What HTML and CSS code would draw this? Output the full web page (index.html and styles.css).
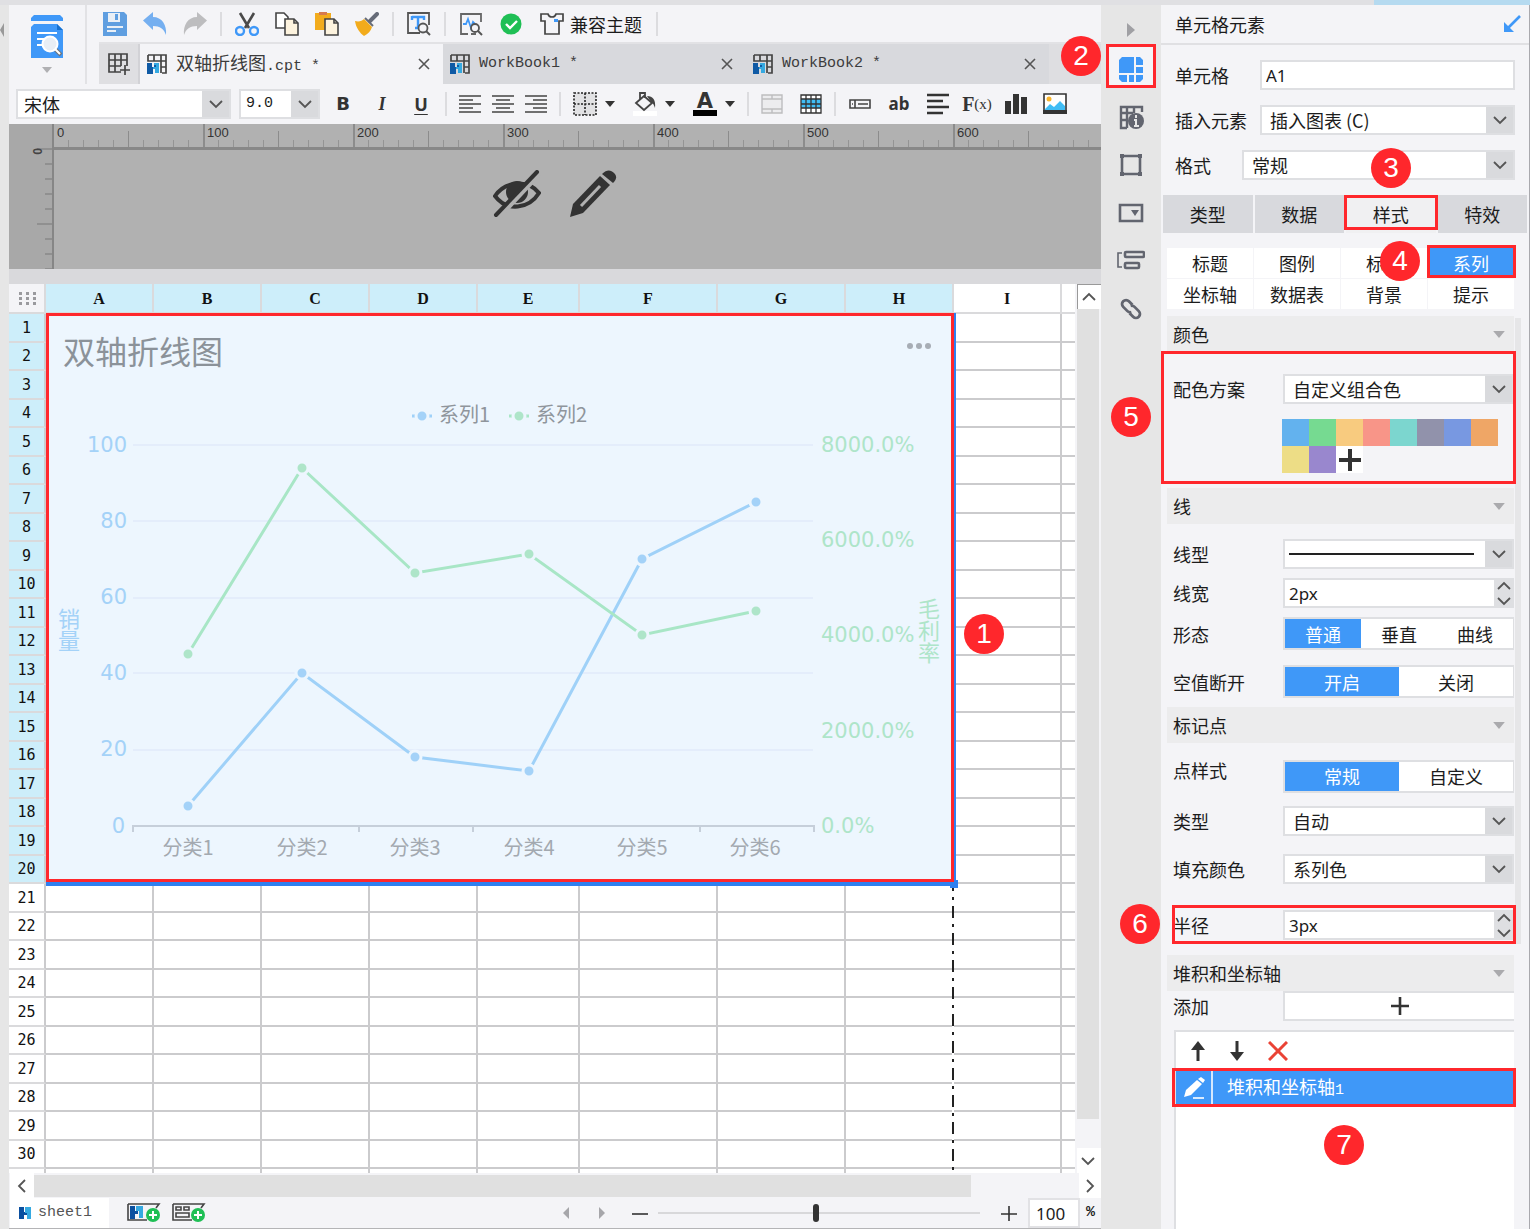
FILE: index.html
```html
<!DOCTYPE html>
<html lang="zh-CN">
<head>
<meta charset="utf-8">
<title>双轴折线图.cpt</title>
<link rel="stylesheet" href="styles.css">
<script src="sheet.js" defer></script>
</head>
<body>
<svg class="defs" aria-hidden="true">
  <symbol id="i-book" viewBox="0 0 20 20"><path d="M1 1h18v18h-4M1 1v6h13V1M7 1v6M14 7v12M14 7h5M14 13h5" fill="none" stroke="#444" stroke-width="1.700"/><path d="M0 9h5v4h2v-2h4v3H6v6H0z" fill="#0f5aa5"/><path d="M7 9h5v10H8v-4H6v-2h3v-2H7z" fill="#35a9e1"/></symbol>
  <symbol id="i-close" viewBox="0 0 14 14"><path d="M2 2l10 10M12 2L2 12" fill="none" stroke="#555" stroke-width="1.6"/></symbol>
  <symbol id="i-down" viewBox="0 0 14 14"><path d="M1 4l6 6 6-6" fill="none" stroke="#555" stroke-width="1.8"/></symbol>
  <symbol id="i-up" viewBox="0 0 14 14"><path d="M1 10l6-6 6 6" fill="none" stroke="#555" stroke-width="1.8"/></symbol>
  <symbol id="i-caret" viewBox="0 0 10 6"><path d="M0 0h10L5 6z" fill="currentColor"/></symbol>
  <symbol id="i-h" viewBox="0 0 12 12"><path d="M0 0h5v5h3v3H5v4H0z" fill="#0b50a0"/><path d="M6 0h6v12H8V6H6z" fill="#35a9e1"/></symbol>
</svg>

<div class="topstrip"><span class="topstrip-accent"></span></div>
<div class="app">
  <div class="edge"><svg class="edge-mark" viewBox="0 0 4 14"><path d="M4 0v14L0 7z" fill="#999"/></svg></div>

  <main class="work">
    <header class="head">
      <button class="filemenu" aria-label="文件">
        <svg width="32" height="44" viewBox="0 0 32 44"><path d="M3 0h26l3 3v3H0V3z" fill="#3f98f8"/><path d="M3 9h23l6 6v28H0V12z" fill="#3f98f8"/><path d="M26 9l6 6h-6z" fill="#1670cf"/><path d="M6 18h20M6 24h10M6 30h8" stroke="#fff" stroke-width="2"/><path d="M24 34l6 6" stroke="#6f747a" stroke-width="4"/><path d="M24 34l5 5" stroke="#fff" stroke-width="2"/><circle cx="19" cy="29" r="7.500" fill="#e8eef5" stroke="#fff" stroke-width="2"/></svg>
        <svg class="grey" width="10" height="6"><use href="#i-caret"/></svg>
      </button>
      <div class="head-right">
        <div class="toolbar">
          <button aria-label="保存"><svg viewBox="0 0 24 24"><path d="M0 0h21l3 3v21H0z" fill="#5f9ee0"/><path d="M5 1h12v9H5z" fill="#e9eff6"/><path d="M12 2h3v6h-3z" fill="#5f9ee0"/><path d="M4 15h16M4 19h9" stroke="#e9eff6" stroke-width="2"/></svg></button>
          <button aria-label="撤销"><svg viewBox="0 0 24 24"><path d="M0 8.500L10 0v5c9 0 14 8 13 18-2-6-6-9-13-9v4z" fill="#75aff0"/></svg></button>
          <button aria-label="重做"><svg viewBox="0 0 24 24"><path d="M24 8.500L14 0v5C5 5 0 13 1 23c2-6 6-9 13-9v4z" fill="#bdbdbf"/></svg></button>
          <i class="sep"></i>
          <button aria-label="剪切"><svg viewBox="0 0 24 24"><path d="M5 1l9 15M19 1l-9 15" stroke="#4a4a4a" stroke-width="2.600"/><circle cx="5" cy="19" r="4" fill="none" stroke="#3f98f8" stroke-width="2.400"/><circle cx="19" cy="19" r="4" fill="none" stroke="#3f98f8" stroke-width="2.400"/></svg></button>
          <button aria-label="复制"><svg viewBox="0 0 24 24"><path d="M1 1h8l4 4v11H1z" fill="#fff" stroke="#444" stroke-width="1.600"/><path d="M10 7h9l4 4v12H10z" fill="#fdf3de" stroke="#444" stroke-width="1.600"/><path d="M19 7v4h4" fill="none" stroke="#444" stroke-width="1.600"/></svg></button>
          <button aria-label="粘贴"><svg viewBox="0 0 24 24"><path d="M0 1h16v17H0z" fill="#f2ab1c"/><path d="M4 0h8v3H4z" fill="#d67a50"/><path d="M10 7h9l4 4v12H10z" fill="#fdf3de" stroke="#444" stroke-width="1.600"/><path d="M19 7v4h4" fill="none" stroke="#444" stroke-width="1.600"/></svg></button>
          <button aria-label="格式刷"><svg viewBox="0 0 24 24"><path d="M15 9l7-7" stroke="#666b78" stroke-width="4" stroke-linecap="round"/><path d="M10 6l8 8" stroke="#666b78" stroke-width="2"/><path d="M0 9c4 1 7 0 9-2l8 8c-1 4-4 7-8 9-4-3-8-8-9-15z" fill="#f2ab1c"/></svg></button>
          <i class="sep"></i>
          <button aria-label="查找"><svg viewBox="0 0 24 24"><path d="M13 21H1V1h21v12" fill="none" stroke="#555" stroke-width="1.800"/><path d="M5 5h12v3M11 5v11M8 16h5M5 4v4" fill="none" stroke="#3f98f8" stroke-width="2.400"/><circle cx="16" cy="16" r="4.500" fill="#f4f4f7" stroke="#555" stroke-width="1.800"/><path d="M19 19l4 4" stroke="#555" stroke-width="2"/></svg></button>
          <i class="sep"></i>
          <button aria-label="性能检测"><svg viewBox="0 0 24 24"><path d="M9 22H2V2h20v8M12 22h5" fill="none" stroke="#666" stroke-width="1.800"/><path d="M4 12h3l2-5 3 9 2-6 2 2" fill="none" stroke="#3f98f8" stroke-width="1.800"/><circle cx="16" cy="16" r="4" fill="#f4f4f7" stroke="#555" stroke-width="1.800"/><path d="M19 19l4 4" stroke="#555" stroke-width="2"/></svg></button>
          <button aria-label="校验"><svg viewBox="0 0 24 24"><circle cx="12" cy="12" r="10.500" fill="#1fbf55"/><path d="M7 12l4 4 7-7" fill="none" stroke="#fff" stroke-width="2.400"/></svg></button>
          <button class="theme"><svg viewBox="0 0 24 24"><path d="M1 2h7c1 4 7 4 8 0h7v7h-4v13H5V9H1z" fill="none" stroke="#444" stroke-width="1.700"/><path d="M14 7h4v3h-4z" fill="#3f98f8"/></svg><span>兼容主题</span></button>
          <i class="sep"></i>
        </div>
        <nav class="tabs">
          <button class="tab-add" aria-label="新建"><svg width="22" height="22" viewBox="0 0 22 22"><path d="M13 19H1V1h18v12M1 7h18M1 13h12M7 1v18M13 1v12" fill="none" stroke="#444" stroke-width="1.700"/><path d="M17 12v10M12 17h10" stroke="#444" stroke-width="1.700"/></svg></button>
          <button class="tab active"><svg width="20" height="20"><use href="#i-book"/></svg><span class="mono"><span class="cjk">双轴折线图</span>.cpt *</span><svg class="x" width="14" height="14"><use href="#i-close"/></svg></button>
          <button class="tab"><svg width="20" height="20"><use href="#i-book"/></svg><span class="mono">WorkBook1 *</span><svg class="x" width="14" height="14"><use href="#i-close"/></svg></button>
          <button class="tab"><svg width="20" height="20"><use href="#i-book"/></svg><span class="mono">WorkBook2 *</span><svg class="x" width="14" height="14"><use href="#i-close"/></svg></button>
        </nav>
      </div>
    </header>

    <div class="format">
      <div class="combo font-name"><select aria-label="字体"><option>宋体</option></select><svg><use href="#i-down"/></svg></div>
      <div class="combo font-size"><select aria-label="字号"><option>9.0</option></select><svg><use href="#i-down"/></svg></div>
      <div class="fgroup first">
        <button class="bold">B</button><button class="italic">I</button><button class="under">U</button>
      </div>
      <i class="sep"></i>
      <div class="fgroup aligns">
        <button aria-label="左对齐"><svg viewBox="0 0 22 20"><path d="M0 2h22M0 6h14M0 10h22M0 14h14M0 18h22" stroke="#444" stroke-width="1.600"/></svg></button>
        <button aria-label="居中"><svg viewBox="0 0 22 20"><path d="M0 2h22M4 6h14M0 10h22M4 14h14M0 18h22" stroke="#444" stroke-width="1.600"/></svg></button>
        <button aria-label="右对齐"><svg viewBox="0 0 22 20"><path d="M0 2h22M8 6h14M0 10h22M8 14h14M0 18h22" stroke="#444" stroke-width="1.600"/></svg></button>
      </div>
      <i class="sep"></i>
      <div class="fgroup splits">
        <button class="split" aria-label="边框"><svg viewBox="0 0 24 24"><path d="M1 1h22v22H1zM12 1v22M1 12h22" fill="#e2e2e4" stroke="#222" stroke-width="1.600" stroke-dasharray="2 1.500"/></svg><svg class="caret"><use href="#i-caret"/></svg></button>
        <button class="split" aria-label="填充"><svg viewBox="0 0 24 24"><path d="M0 19h24v5H0z" fill="#fff"/><path d="M3 11l8-7 8 7-8 7zM7 7V1h5v5" fill="none" stroke="#444" stroke-width="1.800"/><path d="M14 4c6 0 9 4 8 12-1-3-2-5-4-6z" fill="#444"/></svg><svg class="caret"><use href="#i-caret"/></svg></button>
        <button class="split" aria-label="字体颜色"><span class="colorA">A</span><svg class="caret"><use href="#i-caret"/></svg></button>
      </div>
      <i class="sep"></i>
      <div class="fgroup cells">
        <button aria-label="合并"><svg viewBox="0 0 22 20"><path d="M1 1h20v18H1zM1 5h20M1 15h20M11 1v4M11 15v4" fill="#ececee" stroke="#bdbdbf" stroke-width="1.400"/></svg></button>
        <button aria-label="表格"><svg viewBox="0 0 22 20"><path d="M1 1h20v18H1z" fill="#fff"/><path d="M1 5h20v9H1z" fill="#40bdf5"/><path d="M1 1h20v18H1zM1 5h20M1 10h20M1 14h20M6 1v18M11 1v18M16 1v18" fill="none" stroke="#333" stroke-width="1.300"/></svg></button>
      </div>
      <i class="sep"></i>
      <div class="fgroup">
        <button aria-label="控件"><svg viewBox="0 0 24 24"><path d="M2 8h20v8H2zM7 8v8M10 12h10M4 12h1" fill="none" stroke="#444" stroke-width="1.600"/></svg></button>
        <button class="ab">ab</button>
        <button aria-label="段落"><svg viewBox="0 0 24 24"><path d="M1 3h22M1 9h16M1 15h22M1 21h16" stroke="#333" stroke-width="2.600"/></svg></button>
        <button class="fx">F<small>(x)</small></button>
        <button aria-label="图表"><svg viewBox="0 0 24 24"><path d="M1 9h6v13H1zM9 2h6v20H9zM17 5h6v17h-6z" fill="#333"/></svg></button>
        <button aria-label="图片"><svg viewBox="0 0 24 24"><path d="M1 2h22v19H1z" fill="#fff" stroke="#333" stroke-width="1.600"/><circle cx="6" cy="7" r="2.500" fill="#f9b52c"/><path d="M2 17l5-5 4 3 6-6 5 5v5H2z" fill="#40bdf5"/><path d="M0 18h24v4H0z" fill="#333"/></svg></button>
      </div>
    </div>

    <section class="canvas-head">
      <div class="vruler"><span>0</span></div>
      <div class="canvas-body">
        <div class="hruler"><span>0</span><span>100</span><span>200</span><span>300</span><span>400</span><span>500</span><span>600</span></div>
        <div class="canvas-tools">
          <button aria-label="隐藏"><svg viewBox="0 0 48 48"><path d="M2 26c10-15 33-17 44-3-10 16-32 19-44 3z" fill="none" stroke="#333" stroke-width="4"/><circle cx="24" cy="22" r="11" fill="#333"/><path d="M46 4L6 47" stroke="#b1b1b1" stroke-width="5"/><path d="M44 2L3 45" stroke="#333" stroke-width="4" stroke-linecap="round"/></svg></button>
          <button aria-label="编辑"><svg viewBox="0 0 48 48"><path d="M1 47l3-13L31 6l10 9-27 28z" fill="#333"/><path d="M33 4c5-5 9-4 12-1s3 6-1 10z" fill="#333"/><path d="M12 36L31 16" stroke="#b1b1b1" stroke-width="3"/></svg></button>
        </div>
      </div>
    </section>

    <section class="sheet">
      <div class="sheet-view">
        <table class="grid">
          <colgroup><col class="c-head"><col span="4" class="c-m"><col class="c-s"><col class="c-xl"><col class="c-l"><col span="2" class="c-m"><col></colgroup>
          <thead><tr><th class="corner"><svg width="18" height="14" viewBox="0 0 18 14"><path d="M1 1.500h18M1 6.500h18M1 11.500h18" stroke="#9a9a9e" stroke-width="3" stroke-dasharray="3 4"/></svg></th><th class="on">A</th><th class="on">B</th><th class="on">C</th><th class="on">D</th><th class="on">E</th><th class="on">F</th><th class="on">G</th><th class="on">H</th><th>I</th><th></th></tr></thead>
          <tbody></tbody>
        </table>
        <i class="pagebreak"></i>
        <div class="chart">
          <svg viewBox="46 313 908 570" width="908" height="570">
            <text class="c-title" x="63" y="364">双轴折线图</text>
            <g fill="#a7adb5"><circle cx="910" cy="346" r="3"/><circle cx="919" cy="346" r="3"/><circle cx="928" cy="346" r="3"/></g>
            <path d="M412 416h20" stroke="#9fd1f8" stroke-width="3"/><circle class="dot b" cx="422" cy="416" r="6"/>
            <text class="c-leg" x="439" y="422">系列1</text>
            <path d="M509 416h20" stroke="#a8e6c6" stroke-width="3"/><circle class="dot g" cx="519" cy="416" r="6"/>
            <text class="c-leg" x="536" y="422">系列2</text>
            <path d="M133 445h680M133 521h680M133 598h680M133 673h680M133 750h680" stroke="#e4edfb" stroke-width="2"/>
            <path d="M133 832v-6h681v6M359 826v6M473 826v6M700 826v6" fill="none" stroke="#c6cfda" stroke-width="2"/>
            <g class="ax b" text-anchor="end"><text x="127" y="452">100</text><text x="127" y="528">80</text><text x="127" y="604">60</text><text x="127" y="680">40</text><text x="127" y="756">20</text><text x="125" y="833">0</text></g>
            <g class="ax g"><text x="821" y="452">8000.0%</text><text x="821" y="547">6000.0%</text><text x="821" y="642">4000.0%</text><text x="821" y="738">2000.0%</text><text x="821" y="833">0.0%</text></g>
            <g class="name b"><text x="69" y="608">销量</text></g>
            <g class="name g"><text x="929" y="598">毛利率</text></g>
            <g class="cat" text-anchor="middle"><text x="188" y="855">分类1</text><text x="302" y="855">分类2</text><text x="415" y="855">分类3</text><text x="529" y="855">分类4</text><text x="642" y="855">分类5</text><text x="755" y="855">分类6</text></g>
            <path class="ln" stroke="#9fd1f8" d="M188 806L302 673 415 757 529 771 642 559 756 502"/>
            <path class="ln" stroke="#a8e6c6" d="M188 654L302 468 415 573 529 554 642 635 756 611"/>
            <g class="dot b"><circle cx="188" cy="806" r="6"/><circle cx="302" cy="673" r="6"/><circle cx="415" cy="757" r="6"/><circle cx="529" cy="771" r="6"/><circle cx="642" cy="559" r="6"/><circle cx="756" cy="502" r="6"/></g>
            <g class="dot g"><circle cx="188" cy="654" r="6"/><circle cx="302" cy="468" r="6"/><circle cx="415" cy="573" r="6"/><circle cx="529" cy="554" r="6"/><circle cx="642" cy="635" r="6"/><circle cx="756" cy="611" r="6"/></g>
          </svg>
          <i class="handle"></i>
          <b class="badge n1">1</b>
        </div>
      </div>
      <div class="vscroll">
        <button aria-label="向上"><svg width="14" height="14"><use href="#i-up"/></svg></button>
        <i class="vthumb"></i>
        <button aria-label="向下"><svg width="14" height="14"><use href="#i-down"/></svg></button>
      </div>
    </section>

    <div class="hscroll">
      <button aria-label="向左"><svg width="14" height="14" viewBox="0 0 14 14"><path d="M10 1L4 7l6 6" fill="none" stroke="#555" stroke-width="1.800"/></svg></button>
      <i class="hthumb"></i>
      <button aria-label="向右"><svg width="14" height="14" viewBox="0 0 14 14"><path d="M4 1l6 6-6 6" fill="none" stroke="#555" stroke-width="1.800"/></svg></button>
    </div>

    <footer class="status">
      <button class="sheet-tab mono"><svg width="12" height="12"><use href="#i-h"/></svg>sheet1</button>
      <button class="add" aria-label="新增sheet"><svg width="34" height="20" viewBox="0 0 34 20"><path d="M1 1h31l-3 4M1 1v16h19" fill="none" stroke="#444" stroke-width="1.600"/><path d="M3 3h5v5h3v3H8v5H3z" fill="#0b50a0"/><path d="M9 3h7v12h-4V8H9z" fill="#35a9e1"/><circle cx="26" cy="12" r="7" fill="#1fbf55"/><path d="M26 8v8M22 12h8" stroke="#fff" stroke-width="2"/></svg></button>
      <button class="add" aria-label="新增聚合块"><svg width="34" height="20" viewBox="0 0 34 20"><path d="M1 1h31l-3 4M1 1v16h19" fill="none" stroke="#444" stroke-width="1.600"/><path d="M4 4h5v3H4zM12 4h5v3h-5zM4 10h13v4H4z" fill="none" stroke="#444" stroke-width="1.600"/><circle cx="26" cy="12" r="7" fill="#1fbf55"/><path d="M26 8v8M22 12h8" stroke="#fff" stroke-width="2"/></svg></button>
      <div class="zoom">
        <button aria-label="上一页"><svg width="7" height="12" viewBox="0 0 7 12"><path d="M7 0v12L1 6z" fill="#a6a6aa"/></svg></button>
        <button aria-label="下一页" class="next"><svg width="7" height="12" viewBox="0 0 7 12"><path d="M0 0v12l6-6z" fill="#a6a6aa"/></svg></button>
        <button aria-label="缩小"><svg width="16" height="16" viewBox="0 0 16 16"><path d="M0 9h16" stroke="#333" stroke-width="1.600"/></svg></button>
        <input type="range" aria-label="缩放" min="0" max="100" value="49">
        <button aria-label="放大"><svg width="16" height="16" viewBox="0 0 16 16"><path d="M0 9h16M8 1v15" stroke="#333" stroke-width="1.600"/></svg></button>
        <label class="pct"><input type="text" value="100"><span>%</span></label>
      </div>
    </footer>
  </main>

  <aside class="rail">
    <button class="fold" aria-label="折叠"><svg width="9" height="14" viewBox="0 0 9 14"><path d="M0 0v14l8-7z" fill="#a0a0a4"/></svg></button>
    <button class="on" aria-label="单元格元素"><svg width="24" height="25" viewBox="0 0 24 25"><path d="M3 0h12v16H0V3zM17 0h4l3 3v5h-7zM17 10h7v6h-7zM0 18h8v7H3l-3-3zM10 18h5v7h-5zM17 18h7v4l-3 3h-4z" fill="#3f98f8"/></svg><b class="badge n2">2</b></button>
    <button aria-label="单元格属性"><svg width="26" height="26" viewBox="0 0 26 26"><path d="M9 24H3V3h21v5M3 9h12M3 16h6M9 3v21M16 3v6" fill="none" stroke="#62656f" stroke-width="2.400"/><circle cx="18" cy="17" r="8" fill="#62656f"/><path d="M18 11v3M16 16h2v6M16 22h5" stroke="#e6e6e6" stroke-width="2" fill="none"/></svg></button>
    <button aria-label="悬浮元素"><svg width="26" height="26" viewBox="0 0 26 26"><path d="M4 4h18v18H4z" fill="none" stroke="#62656f" stroke-width="2.600"/><path d="M2 2h4v4H2zM20 2h4v4h-4zM2 20h4v4H2zM20 20h4v4h-4z" fill="#62656f"/></svg></button>
    <button aria-label="控件设置"><svg width="26" height="26" viewBox="0 0 26 26"><path d="M2 5h22v16H2z" fill="none" stroke="#62656f" stroke-width="2.600"/><path d="M13 10h8l-4 6z" fill="#62656f"/></svg></button>
    <button aria-label="条件属性"><svg width="28" height="26" viewBox="0 0 28 26"><path d="M5 5H1v14h4" fill="none" stroke="#62656f" stroke-width="1.600"/><rect x="8" y="4" width="19" height="5" rx="1" fill="none" stroke="#62656f" stroke-width="2.600"/><rect x="8" y="15" width="14" height="5" rx="1" fill="none" stroke="#62656f" stroke-width="2.600"/></svg></button>
    <button aria-label="超级链接"><svg width="26" height="26" viewBox="0 0 26 26" fill="none" stroke="#62656f" stroke-width="2.800"><g transform="rotate(45 13 13)"><path d="M11 9H6a4 4 0 0 0 0 8h6a4 4 0 0 0 3.500-2"/><path d="M15 17h5a4 4 0 0 0 0-8h-6a4 4 0 0 0-3.500 2"/></g></svg></button>
  </aside>

  <aside class="panel">
    <h2>单元格元素<svg width="18" height="18" viewBox="0 0 18 18"><path d="M17 1L4 14" stroke="#3f98f8" stroke-width="2.600"/><path d="M1 7v10h10z" fill="#3f98f8"/></svg></h2>
    <div class="top-fields">
      <div class="field wide"><label for="cell">单元格</label><input id="cell" type="text" value="A1"></div>
      <div class="field wide"><label for="ins">插入元素</label><div class="combo"><select id="ins"><option>插入图表 (C)</option></select><svg><use href="#i-down"/></svg></div></div>
      <div class="field wider"><label for="fmt">格式</label><div class="combo"><select id="fmt"><option>常规</option></select><svg><use href="#i-down"/></svg></div></div>
    </div>
    <nav class="ptabs"><button>类型</button><button>数据</button><button class="on">样式<b class="badge n3">3</b></button><button>特效</button></nav>
    <div class="scroller">
      <nav class="stabs"><button>标题</button><button>图例</button><button>标签</button><button class="on">系列<b class="badge n4">4</b></button><button>坐标轴</button><button>数据表</button><button>背景</button><button>提示</button></nav>
      <div class="sections">
        <h3>颜色<svg><use href="#i-caret"/></svg></h3>
        <div class="marked palette">
          <div class="field"><label for="scheme">配色方案</label><div class="combo"><select id="scheme"><option>自定义组合色</option></select><svg><use href="#i-down"/></svg></div></div>
          <div class="swatches"><i class="s1"></i><i class="s2"></i><i class="s3"></i><i class="s4"></i><i class="s5"></i><i class="s6"></i><i class="s7"></i><i class="s8"></i><i class="s9"></i><i class="s10"></i><button aria-label="添加颜色"><svg width="24" height="24" viewBox="0 0 24 24"><path d="M12 1v22M1 12h22" stroke="#333" stroke-width="4"/></svg></button></div>
          <b class="badge n5">5</b>
        </div>
        <h3 class="gm">线<svg><use href="#i-caret"/></svg></h3>
        <div class="field gm"><label for="ltype">线型</label><div class="combo line"><select id="ltype"><option></option></select><i></i><svg><use href="#i-down"/></svg></div></div>
        <div class="field gs"><label for="lw">线宽</label><div class="spin"><input id="lw" type="text" value="2px"><span><button aria-label="增加"><svg><use href="#i-up"/></svg></button><button aria-label="减少"><svg><use href="#i-down"/></svg></button></span></div></div>
        <div class="field gs"><span>形态</span><div class="seg"><button class="on">普通</button><button>垂直</button><button>曲线</button></div></div>
        <div class="field gm"><span>空值断开</span><div class="seg"><button class="on">开启</button><button>关闭</button></div></div>
        <h3 class="gs">标记点<svg><use href="#i-caret"/></svg></h3>
        <div class="field gm raised"><span>点样式</span><div class="seg"><button class="on">常规</button><button>自定义</button></div></div>
        <div class="field g12"><label for="ptype">类型</label><div class="combo"><select id="ptype"><option>自动</option></select><svg><use href="#i-down"/></svg></div></div>
        <div class="field g18"><label for="pfill">填充颜色</label><div class="combo"><select id="pfill"><option>系列色</option></select><svg><use href="#i-down"/></svg></div></div>
        <div class="field gl marked radius"><label for="rad">半径</label><div class="spin"><input id="rad" type="text" value="3px"><span><button aria-label="增加"><svg><use href="#i-up"/></svg></button><button aria-label="减少"><svg><use href="#i-down"/></svg></button></span></div><b class="badge n6">6</b></div>
        <h3 class="gm">堆积和坐标轴<svg><use href="#i-caret"/></svg></h3>
        <div class="field"><span>添加</span><button class="addbtn" aria-label="添加"><svg width="18" height="18" viewBox="0 0 18 18"><path d="M9 0v18M0 9h18" stroke="#333" stroke-width="2.600"/></svg></button></div>
        <div class="list gs">
          <div class="list-tools">
            <button aria-label="上移"><svg width="16" height="20" viewBox="0 0 16 20"><path d="M8 4v16" stroke="#333" stroke-width="3"/><path d="M8 0l7 9H1z" fill="#333"/></svg></button>
            <button aria-label="下移"><svg width="16" height="20" viewBox="0 0 16 20"><path d="M8 0v16" stroke="#333" stroke-width="3"/><path d="M8 20l7-9H1z" fill="#333"/></svg></button>
            <button aria-label="删除"><svg width="20" height="20" viewBox="0 0 20 20"><path d="M1 1l18 18M19 1L1 19" stroke="#ea4335" stroke-width="3"/></svg></button>
          </div>
          <div class="item marked"><button aria-label="编辑"><svg width="22" height="22" viewBox="0 0 22 22"><path d="M1 20l2-7L14 3l5 4L8 18z" fill="#fff"/><path d="M15 2l3-2 4 3-2 3z" fill="#fff"/><path d="M10 21h11" stroke="#fff" stroke-width="1.600"/></svg></button><span>堆积和坐标轴<small class="mono">1</small></span></div>
          <b class="badge n7">7</b>
        </div>
      </div>
    </div>
  </aside>
</div>
</body>
</html>
```

FILE: styles.css
```css
* { box-sizing: border-box; }
body { margin: 0; display: flex; flex-direction: column; min-height: 100vh; background: #f4f4f7; color: #1c1c1c; font: 18px/24px "Noto Sans CJK SC", "Noto Sans", sans-serif; }
button { margin: 0; padding: 0; border: 0; background: none; color: inherit; font: inherit; display: flex; align-items: center; justify-content: center; }
input, select { font: inherit; color: inherit; margin: 0; border-radius: 0; }
svg { display: block; flex: none; }
i { font-style: normal; display: block; }
.defs { position: absolute; width: 0; height: 0; }
.mono { font-family: "Liberation Mono", "Noto Sans CJK SC", monospace; font-size: 15px; }
.cjk { font-family: "Noto Sans CJK SC", sans-serif; font-size: 18px; }
.sep { width: 2px; height: 24px; background: #dcdcdf; flex: none; }

.topstrip { height: 5px; background: #e0e0e3; display: flex; justify-content: flex-end; }
.topstrip-accent { width: 156px; background: #b5daf0; }
.app { flex: 1; display: flex; }
.edge { width: 9px; background: #e6e6e6; padding-top: 18px; }
.edge-mark { width: 4px; height: 14px; }
.work { flex: 1; min-width: 0; display: flex; flex-direction: column; }

/* header */
.head { display: flex; }
.filemenu { width: 78px; height: 79px; flex-direction: column; justify-content: flex-start; padding-top: 10px; gap: 8px; border-right: 2px solid #e2e2e5; }
.grey { color: #b0b0b3; }
.head-right { flex: 1; min-width: 0; }
.toolbar { height: 37px; display: flex; align-items: center; padding-left: 8px; }
.toolbar button { margin: 0 8px; }
.toolbar button svg { width: 24px; height: 24px; }
.toolbar .sep { margin: 0 5px; }
.toolbar .theme { gap: 6px; margin: 0 9px; }
.tabs { height: 42px; display: flex; margin-left: 12px; background: #dedee1; border-top: 2px solid #e2e2e5; }
.tab-add { width: 41px; background: #dfdfe2; border-right: 2px solid #d2d2d6; }
.tab { width: 303px; padding: 0 12px 0 7px; justify-content: flex-start; gap: 9px; background: #d8d9dd; color: #3c3c3c; white-space: pre; }
.tab.active { background: #f4f4f7; }
.tab .x { margin-left: auto; }

/* format bar */
.format { height: 40px; display: flex; align-items: center; padding-left: 7px; }
.format .sep { margin: 0 12px; }
.format .font-name { width: 215px; margin-right: 8px; }
.format .font-size { width: 81px; }
.format .font-name select { padding-left: 6px; }
.format .font-size select { padding-left: 5px; font-family: "Liberation Mono", monospace; font-size: 15px; }
.fgroup { display: flex; gap: 15px; }
.fgroup.first { padding-left: 11px; }
.fgroup button { width: 24px; height: 24px; }
.fgroup svg { width: 24px; height: 24px; }
.aligns { gap: 11px; }
.cells { gap: 17px; }
.aligns button, .aligns svg, .cells button, .cells svg { width: 22px; }
.splits { gap: 18px; }
.fgroup .split { width: 42px; gap: 8px; }
.fgroup .caret { width: 10px; height: 6px; color: #333; }
.fgroup .bold { font-family: "DejaVu Sans", sans-serif; font-weight: bold; color: #333; }
.fgroup .italic { font-family: "Liberation Serif", serif; font-style: italic; font-weight: bold; color: #333; }
.fgroup .under { font-family: "Noto Sans", sans-serif; font-weight: bold; text-decoration: underline; text-underline-offset: 3px; color: #333; }
.colorA { width: 24px; height: 24px; border-bottom: 6px solid #000; font: bold 21px/18px "DejaVu Sans", sans-serif; color: #333; text-align: center; }
.ab { font: bold 17px/24px "Noto Sans", sans-serif; }
.fgroup .ab { font: bold 17px/24px "Noto Sans", sans-serif; color: #333; }
.fgroup .fx { font: bold 20px/24px "Liberation Serif", serif; color: #333; }
.fx small { font-size: 15px; font-weight: 400; }

/* shared controls */
.combo { position: relative; height: 30px; display: flex; min-width: 0; }
.combo select { width: 100%; height: 30px; appearance: none; border: 2px solid #dedfe2; background: linear-gradient(#d9dadd, #d9dadd) right / 27px 100% no-repeat #fff; padding: 0 30px 0 8px; }
.combo svg { position: absolute; right: 8px; top: 8px; width: 14px; height: 14px; pointer-events: none; }

/* ruler and canvas head */
.canvas-head { display: flex; height: 145px; background: #b1b1b1; }
.vruler { flex: none; width: 45px; border-right: 2px solid #868686; padding: 24px 0 0 22px; background:
  repeating-linear-gradient(#909090 0 2px, transparent 2px 75px) 28px 24px / 15px 100% no-repeat,
  repeating-linear-gradient(#909090 0 2px, transparent 2px 15px) 36px 24px / 8px 100% no-repeat, #a8a8a8; }
.vruler span { display: block; writing-mode: vertical-rl; font: bold 12px/12px "Liberation Sans", sans-serif; color: #444; }
.canvas-body { flex: 1; min-width: 0; }
.hruler { height: 26px; display: flex; overflow: hidden; border-bottom: 3px solid #888; background:
  repeating-linear-gradient(90deg, #8c8c8c 0 2px, transparent 2px 150px) 149px 0 / 100% 100% no-repeat,
  repeating-linear-gradient(90deg, #8c8c8c 0 1px, transparent 1px 75px) 74px 7px / 100% 100% no-repeat,
  repeating-linear-gradient(90deg, #949494 0 1px, transparent 1px 15px) 14px 16px / 100% 100% no-repeat; }
.hruler span { flex: 0 0 150px; padding-left: 3px; font: 13px/18px "Liberation Sans", sans-serif; color: #333; }
.canvas-tools { display: flex; justify-content: center; gap: 28px; padding: 20px 46px 0 0; }
.canvas-tools svg { width: 48px; height: 48px; }

/* sheet */
.sheet { display: flex; margin-top: 15px; background: #fff; box-shadow: 0 -15px 0 #d9d9dc; }
.sheet-view { position: relative; flex: 1; min-width: 0; }
.grid { width: 100%; table-layout: fixed; border-collapse: separate; border-spacing: 0; }
.c-head { width: 37px; } .c-s { width: 102px; } .c-m { width: 108px; } .c-l { width: 128px; } .c-xl { width: 138px; }
.grid th, .grid td { padding: 0; border: solid #cbcbcd; border-width: 0 2px 2px 0; }
.grid thead th { height: 30px; padding-top: 2px; font: bold 16px/24px "Liberation Serif", serif; color: #111; border-color: #dadadc; }
.grid thead th:last-child, .grid td:last-child { border-right: 0; }
.grid .on { background: #cdeefa; }
.grid tbody th { height: 28px; font: 15px/20px "DejaVu Sans Mono", monospace; color: #111; border-bottom-color: #dadadc; }
.grid tbody tr:nth-child(odd) th { height: 29px; }
.grid tbody tr.tail th { height: 4px; border-bottom: 0; }
.grid .tail td { border-bottom: 0; }
.corner { background: #f4f4f7; }
.corner svg { margin: 0 auto; }
.pagebreak { position: absolute; left: 943px; top: 595px; bottom: 0; width: 2px; background: repeating-linear-gradient(#222 0 12px, #fff 12px 18px, #222 18px 21px, #fff 21px 27px); }
.chart { position: absolute; left: 37px; top: 29px; width: 910px; height: 573px; background: #edf6fe; border: solid #2f80f0; border-width: 0 2px 4px 0; }
.chart::after { content: ""; position: absolute; inset: 0; border: 3px solid #ff272c; }
.handle { position: absolute; right: -4px; bottom: -6px; width: 8px; height: 8px; background: #2f80f0; }
.chart text { font-family: "Noto Sans CJK SC", sans-serif; font-size: 20px; }
.chart .c-title { font-size: 32px; fill: #8b9299; }
.c-leg { fill: #8f959c; }
.cat { fill: #a3a9b0; }
.chart .ax text { font-family: "DejaVu Sans", sans-serif; font-size: 21px; }
.chart .name text { font-size: 22px; writing-mode: vertical-rl; }
.b { fill: #a4d2f8; } .g { fill: #aee5c9; }
.dot { stroke: #edf6fe; stroke-width: 3px; }
.ln { fill: none; stroke-width: 3px; }
.vscroll { width: 26px; display: flex; flex-direction: column; padding-left: 2px; background: #f4f4f7; }
.vscroll button { height: 25px; padding-right: 2px; background: #fff; }
.vscroll button:first-child { border: solid #999; border-width: 1px 0 0 1px; }
.vthumb { flex: 0 0 810px; margin-right: 2px; background: #e0e0e0; }
.vscroll button:last-child { margin-top: auto; }
.hscroll { height: 25px; display: flex; padding-left: 1px; }
.hscroll button { width: 24px; background: #fff; }
.hscroll button:last-child { width: 22px; margin-left: auto; }
.hthumb { flex: 0 0 937px; margin: 2px 0 1px; background: #e0e0e0; }

/* status bar */
.status { height: 31px; display: flex; align-items: center; padding-left: 1px; border-bottom: 1px solid #b4b4b6; }
.sheet-tab { width: 99px; height: 30px; gap: 7px; padding-right: 8px; background: #fff; color: #555; }
.add { margin-left: 11px; }
.sheet-tab + .add { margin-left: 18px; }
.zoom { margin-left: auto; display: flex; align-items: center; padding-right: 6px; }
.zoom .next { margin: 0 26px 0 30px; }
.zoom > input { width: 322px; height: 20px; margin: 0 21px 0 10px; appearance: none; background: linear-gradient(#d8d8da, #d8d8da) center / 100% 2px no-repeat; }
.zoom > input::-webkit-slider-thumb { appearance: none; width: 6px; height: 18px; border-radius: 3px; background: #333; }
.pct { display: flex; align-items: center; gap: 6px; margin-left: 11px; }
.pct input { width: 52px; height: 30px; padding: 0 6px; border: 2px solid #e2e2e5; background: #fff; font: 17px/24px "Noto Sans", sans-serif; }
.pct span { font: bold 15px/20px "Liberation Mono", monospace; }

/* icon rail */
.rail { width: 60px; background: #e6e6e6; display: flex; flex-direction: column; align-items: center; }
.rail button { position: relative; width: 50px; height: 48px; }
.rail .fold { height: 40px; padding-top: 10px; }
.rail .on::before { content: ""; position: absolute; inset: -1px 0 5px; background: #f4f4f7; border: 3px solid #ff272c; }
.rail .on svg { position: relative; }

/* property panel */
.panel { width: 369px; display: flex; flex-direction: column; border-right: 1px solid #a9a9ae; }
.panel h2 { margin: 0; height: 40px; padding: 0 8px 0 14px; display: flex; align-items: center; justify-content: space-between; font-size: 18px; font-weight: 400; border-bottom: 2px solid #e0e0e3; }
.top-fields { display: flex; flex-direction: column; gap: 15px; padding: 15px 14px; }
.field { position: relative; display: grid; grid-template-columns: 110px minmax(0, 1fr); align-items: center; padding-left: 6px; }
.top-fields .field { padding-left: 0; }
.field.wide { grid-template-columns: 85px minmax(0, 1fr); }
.field.wider { grid-template-columns: 67px minmax(0, 1fr); }
.field > input, .spin input { width: 100%; height: 30px; border: 2px solid #dedfe2; background: #fff; padding: 0 4px; font: 17px/24px "Noto Sans", sans-serif; }
.ptabs { display: grid; grid-template-columns: repeat(4, 1fr); gap: 2px; height: 38px; margin: 0 2px; }
.ptabs button { position: relative; background: #d8d9dd; }
.ptabs .on { background: #f0f0f2; }
.ptabs .on::after, .stabs .on::after { content: ""; position: absolute; inset: 0 -2px 3px; border: 3px solid #ff272c; }
.scroller { flex: 1; display: flex; flex-direction: column; padding: 15px 8px 0 6px; }
.stabs { display: grid; grid-template-columns: repeat(4, 1fr); grid-auto-rows: 30px; gap: 1px; margin-right: 7px; }
.stabs button { position: relative; background: #fff; }
.stabs .on { background: #3f98f8; color: #fff; }
.stabs .on::after { inset: -3px -2px 0 -1px; }
.sections { flex: 1; display: flex; flex-direction: column; margin-top: 7px; padding-right: 7px; background: linear-gradient(#e6e6e8, #e6e6e8) right 0 top 2px / 6px 626px no-repeat; }
.sections h3 { height: 36px; flex: none; margin: 0; padding: 0 9px 0 6px; display: flex; align-items: center; justify-content: space-between; font-size: 18px; font-weight: 400; background: #ececed; }
.sections h3 svg { width: 12px; height: 7px; color: #aaaaad; }
.sections .gs { margin-top: 9px; }
.sections .g12 { margin-top: 12px; }
.sections .gm { margin-top: 15px; }
.sections .g18 { margin-top: 18px; }
.sections .gl { margin-top: 26px; }
.marked { position: relative; }
.marked::after { content: ""; position: absolute; border: 3px solid #ff272c; pointer-events: none; }
.palette { padding-top: 22px; }
.palette::after { inset: -1px -2px -11px -6px; }
.swatches { display: grid; grid-template-columns: repeat(8, 27px); grid-auto-rows: 27px; margin: 15px 0 0 115px; }
.swatches button { background: #fff; }
.s1 { background: #63b2ee; } .s2 { background: #76da91; } .s3 { background: #f8cb7f; } .s4 { background: #f89588; } .s5 { background: #7cd6cf; }
.s6 { background: #9192ab; } .s7 { background: #7898e1; } .s8 { background: #efa666; } .s9 { background: #eddd86; } .s10 { background: #9987ce; }
.combo.line i { position: absolute; left: 6px; right: 40px; top: 14px; height: 2px; background: #222; }
.spin { display: flex; height: 30px; }
.spin input { flex: 1; min-width: 0; border-right: 0; }
.spin > span { width: 20px; display: flex; flex-direction: column; background: #dedfe2; }
.spin button { flex: 1; }
.spin svg { width: 14px; height: 14px; }
.seg { display: grid; grid-auto-flow: column; grid-auto-columns: 1fr; height: 33px; border: 2px solid #dedfe2; border-right-width: 1px; background: #fff; }
.seg .on { background: #3f98f8; color: #fff; }
.raised > span { padding-bottom: 12px; }
.radius::after { inset: -5px -2px -4px 5px; }
.addbtn { height: 30px; border: 2px solid #dedfe2; border-right: 0; background: #fff; }
.list { position: relative; flex: 1; min-height: 200px; margin-left: 7px; border: 2px solid #dedfe2; border-width: 2px 0 0 2px; background: #fff; }
.list-tools { height: 37px; display: flex; align-items: center; gap: 23px; padding-left: 14px; }
.item { display: flex; height: 38px; background: #3f98f8; color: #fff; align-items: center; }
.item::after { inset: -1px -2px 0 -4px; }
.item button { width: 37px; height: 38px; border-right: 2px solid #d5e8fd; }
.item span { padding-left: 14px; }

/* numbered callouts */
.badge { position: absolute; z-index: 2; width: 40px; height: 40px; border-radius: 50%; background: #ff272c; color: #fff; font: 28px/40px "Liberation Sans", sans-serif; text-align: center; }
.n1 { right: -50px; top: 301px; }
.n2 { left: -45px; top: -9px; }
.n3 { left: 25px; top: -47px; }
.n4 { left: -48px; top: -7px; }
.n5 { left: -56px; top: 45px; }
.n6 { left: -47px; top: -6px; }
.n7 { left: 148px; top: 93px; }
```

FILE: sheet.js
```js
// Builds the 30 numbered rows, plus the sliver of the next one at the bottom.
const body = document.querySelector('.grid tbody');
const ROWS = 30, COLS = 10, SELECTED = 20;
for (let n = 1; n <= ROWS + 1; n++) {
  const row = body.insertRow();
  const head = document.createElement('th');
  if (n <= ROWS) head.textContent = n; else row.className = 'tail';
  if (n <= SELECTED) head.className = 'on';
  row.append(head);
  for (let c = 0; c < COLS; c++) row.insertCell();
}
```
